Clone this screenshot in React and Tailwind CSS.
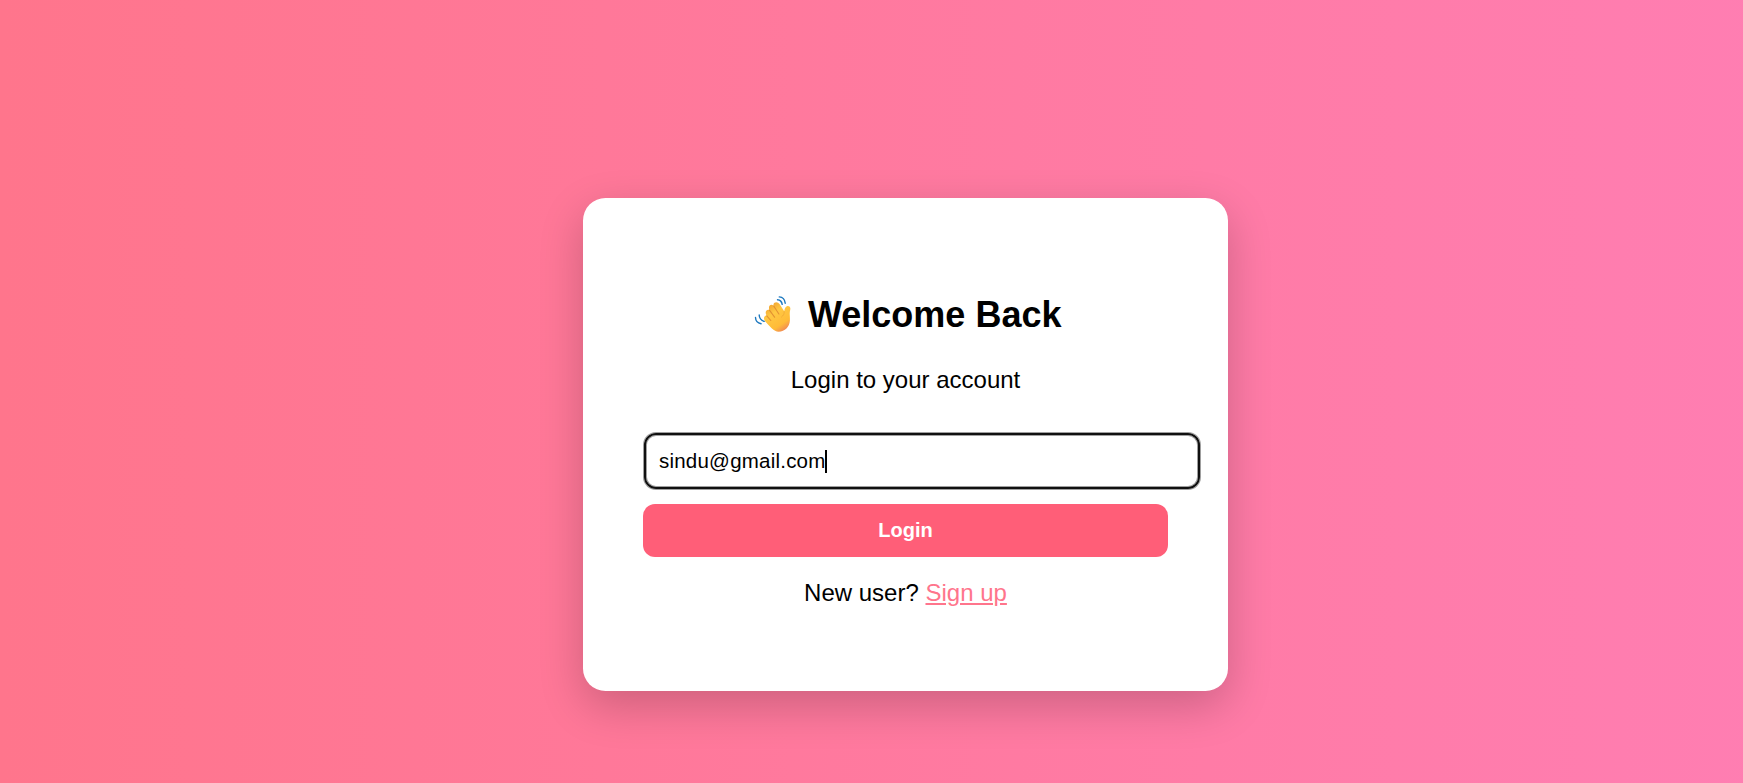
function WavingHand() {
  return (
    <svg viewBox="0 0 60 60" className="h-[60px] w-[60px] shrink-0" aria-hidden="true">
      <defs>
        <linearGradient id="skin" x1="0.2" y1="0.1" x2="0.75" y2="1">
          <stop offset="0" stopColor="#f2a631" />
          <stop offset="0.3" stopColor="#ffc843" />
          <stop offset="0.75" stopColor="#ffbb38" />
          <stop offset="1" stopColor="#ef8457" />
        </linearGradient>
      </defs>
      <path
        d="M21.200 37.500C18.900 35.200 18.400 33 19.600 31.400c.5-.7 1.200-.9 2-.8-1-1.700-1.300-3.700-.3-4.900.8-1 2-1.200 3-.8-.5-1.800-.5-3.600.4-4.500 1.100-1 2.700-.8 3.900.3-.3-1.300 0-2.300.9-3 1.700-1.200 3.900-.4 5.200 1.600l4.500 7c.3-2.300 1-4.400 2.700-5.100 1.500-.6 3.100.1 3.400 1.900.2 1.200-.3 2.500-.5 4-.3 2.300.3 5.100.1 8.500-.3 6.300-5 11.100-11.300 11.100-4.800 0-8.800-5.600-12.400-9.200z"
        fill="url(#skin)"
      />
      <path d="M21.800 30.800l4 4.700M24.400 25.200l5.200 7M28.700 21l5.200 8" fill="none" stroke="#d9812c" strokeWidth="1.100" strokeLinecap="round" opacity="0.75" />
      <path d="M39.200 26.500c.3 2.800-1 4-2.700 5.500" fill="none" stroke="#e79a35" strokeWidth="0.900" strokeLinecap="round" opacity="0.6" />
      <path
        d="M34.300 11.900c3 .2 5.500 2.700 5.900 6.300M32.500 14.700c2.400.2 4.300 2 4.700 4.700M10.500 32.500c.1 3.100 2.300 5.600 5.600 6.200M14.200 29.900c.1 2.900 2 5.500 5 6.400"
        fill="none"
        stroke="#1c78bf"
        strokeWidth="1.400"
        strokeLinecap="round"
      />
    </svg>
  );
}

export default function App() {
  return (
    <div className="h-[783px] w-full overflow-hidden bg-[linear-gradient(to_right,#ff758c,#ff7eb3_1811px)] pt-[198px] pl-[583px] font-['Liberation_Sans',Arial,sans-serif] text-black">
      <main className="flex h-[493px] w-[645px] flex-col rounded-[22.5px] bg-white px-[60px] pt-[87px] shadow-[0_15px_45px_rgba(0,0,0,0.2)]">
        <h2 className="flex h-[60px] items-center pl-[102px] text-[36px] leading-[41px] font-bold whitespace-nowrap">
          <WavingHand />
          <span className="pb-[2px] pl-[3px]">Welcome Back</span>
        </h2>
        <p className="mt-[21px] text-center text-[24px] leading-[27px]">Login to your account</p>
        <form className="mt-[40px]" onSubmit={(e) => e.preventDefault()}>
          <div className="ml-px flex h-[56px] w-[556px] items-center rounded-[12px] border-2 border-[#101010] pl-[13px] text-[20.5px] tracking-[0.22px] shadow-[0_0_0_1px_rgba(16,16,16,0.4),inset_0_0_0_1px_rgba(16,16,16,0.4)]">
            <span>sindu@gmail.com</span>
            <span className="-ml-px h-[23px] w-[2px] bg-black" />
          </div>
          <button className="mt-[15px] block h-[53px] w-[525px] rounded-[12px] bg-[#ff5e78] pb-[2px] text-[20px] font-bold text-white">Login</button>
        </form>
        <p className="mt-[22px] text-center text-[24px] leading-[27px]">
          New user? <a className="text-[#ff758c] underline" href="#signup">Sign up</a>
        </p>
      </main>
    </div>
  );
}
